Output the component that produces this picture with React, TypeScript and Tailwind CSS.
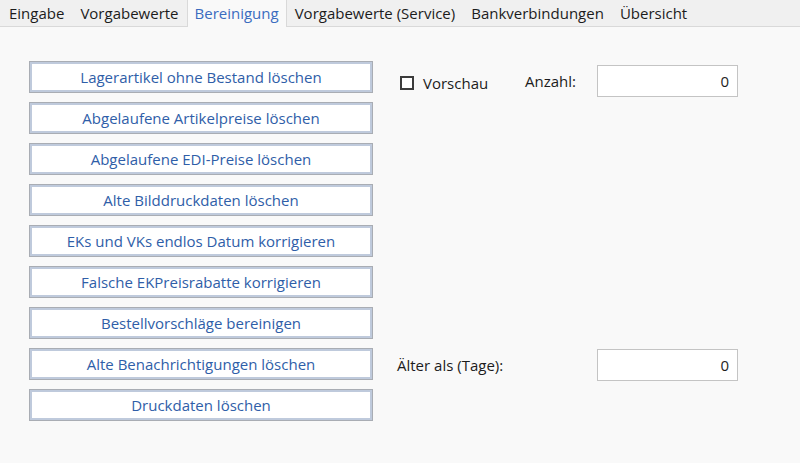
const tabs = ['Eingabe', 'Vorgabewerte', 'Bereinigung', 'Vorgabewerte (Service)', 'Bankverbindungen', 'Übersicht'];

const actions = [
  'Lagerartikel ohne Bestand löschen',
  'Abgelaufene Artikelpreise löschen',
  'Abgelaufene EDI-Preise löschen',
  'Alte Bilddruckdaten löschen',
  'EKs und VKs endlos Datum korrigieren',
  'Falsche EKPreisrabatte korrigieren',
  'Bestellvorschläge bereinigen',
  'Alte Benachrichtigungen löschen',
  'Druckdaten löschen',
];

function NumberField({ value }: { value: string }) {
  return (
    <div className="w-[141px] h-[32px] bg-white border border-[#c4c4c4] flex items-center justify-end pr-[8px] text-[15px] text-[#1e1e1e]">
      {value}
    </div>
  );
}

export default function App() {
  return (
    <div
      className="w-[800px] h-[463px] bg-[#f9f9f9] flex flex-col overflow-hidden"
      style={{ fontFamily: '"Open Sans", "Noto Sans", sans-serif' }}
    >
      {/* tab strip */}
      <div className="h-[27px] bg-[#f0f0f0] border-b border-[#d9d9d9] flex items-end pl-[1px]">
        {tabs.map((t) =>
          t === 'Bereinigung' ? (
            <div
              key={t}
              className="h-[27px] mb-[-1px] bg-[#f9f9f9] border-x border-[#d9d9d9] px-[7px] flex items-center text-[15px] text-[#3b6cbf]"
            >
              {t}
            </div>
          ) : (
            <div key={t} className="h-[26px] px-[8px] flex items-center text-[15px] text-[#1c1c1c]">
              {t}
            </div>
          )
        )}
      </div>

      <div className="flex pl-[29px]">
        {/* action buttons */}
        <div className="flex flex-col gap-[9px] pt-[34px]">
          {actions.map((a) => (
            <button
              key={a}
              className="w-[344px] h-[32px] bg-white border border-[#a9adb4] shadow-[inset_0_0_0_2px_#bfcadc] text-[15px] text-[#2f5ea8] flex items-center justify-center"
            >
              {a}
            </button>
          ))}
        </div>

        {/* options */}
        <div className="ml-[24px] pt-[38px] flex flex-col">
          <div className="flex items-center h-[32px]">
            <div className="w-[128px] flex items-center mt-[4px]">
              <div className="ml-[3px] w-[14px] h-[14px] border-2 border-[#3c3c3c] bg-white" />
              <span className="ml-[9px] text-[15px] text-[#1c1c1c]">Vorschau</span>
            </div>
            <span className="w-[72px] text-[15px] text-[#1c1c1c]">Anzahl:</span>
            <NumberField value="0" />
          </div>
          <div className="flex items-center h-[32px] mt-[252px]">
            <span className="w-[200px] text-[15px] text-[#1c1c1c]">Älter als (Tage):</span>
            <NumberField value="0" />
          </div>
        </div>
      </div>
    </div>
  );
}
